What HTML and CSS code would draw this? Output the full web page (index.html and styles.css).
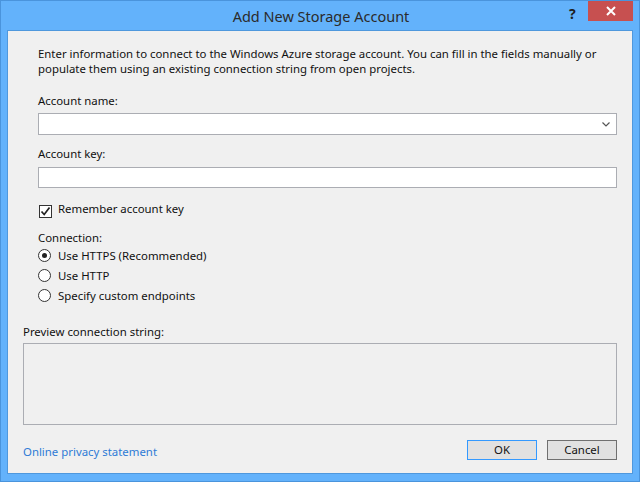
FILE: index.html
```html
<!DOCTYPE html>
<html>
<head>
<meta charset="utf-8">
<link rel="stylesheet" href="styles.css">
</head>
<body>
<div class="window">
  <div class="titlebar">
    <div class="title">Add New Storage Account</div>
    <div class="help">?</div>
    <div class="close">
      <svg width="12" height="12" viewBox="0 0 12 12"><path d="M2 2 L10 10 M10 2 L2 10" stroke="#fff" stroke-width="2"/></svg>
    </div>
  </div>
  <div class="client">
    <div class="form">
      <p class="intro">Enter information to connect to the Windows Azure storage account. You can fill in the fields manually or populate them using an existing connection string from open projects.</p>
      <div class="label l-name">Account name:</div>
      <div class="combo">
        <svg class="arrow" width="8" height="5" viewBox="0 0 8 5"><path d="M0.5 0.5 L4 4 L7.5 0.5" fill="none" stroke="#555" stroke-width="1.2"/></svg>
      </div>
      <div class="label l-key">Account key:</div>
      <div class="textbox"></div>
      <div class="check-row">
        <span class="checkbox">
          <svg width="11" height="11" viewBox="0 0 11 11"><path d="M1.5 5.5 L4.2 8.5 L9.5 1.5" fill="none" stroke="#222" stroke-width="1.7"/></svg>
        </span>
        <span>Remember account key</span>
      </div>
      <div class="label l-conn">Connection:</div>
      <div class="radios">
        <div class="radio-row"><span class="radio checked"></span><span>Use HTTPS (Recommended)</span></div>
        <div class="radio-row"><span class="radio"></span><span>Use HTTP</span></div>
        <div class="radio-row"><span class="radio"></span><span>Specify custom endpoints</span></div>
      </div>
    </div>
    <div class="preview-section">
      <div class="label">Preview connection string:</div>
      <div class="preview"></div>
    </div>
    <div class="footer">
      <a class="link">Online privacy statement</a>
      <div class="buttons">
        <button class="btn ok">OK</button>
        <button class="btn">Cancel</button>
      </div>
    </div>
  </div>
</div>
</body>
</html>
```

FILE: styles.css
```css
html, body {
  margin: 0;
  padding: 0;
}
body {
  width: 640px;
  height: 482px;
  overflow: hidden;
  font-family: "Noto Sans", "Open Sans", sans-serif;
  font-size: 11.4px;
  color: #111;
}
.window {
  width: 640px;
  height: 482px;
  box-sizing: border-box;
  background: #63b2fb;
  border: 1px solid #4a94dc;
  display: flex;
  flex-direction: column;
}
.titlebar {
  height: 29px;
  position: relative;
  flex: none;
}
.title {
  text-align: center;
  font-size: 14.5px;
  line-height: 30px;
  color: #2b2b2b;
  padding-left: 2px;
}
.help {
  position: absolute;
  left: 568px;
  top: 3px;
  font-weight: bold;
  font-size: 14px;
  color: #1e1e1e;
}
.close {
  position: absolute;
  left: 587px;
  top: 0;
  width: 45px;
  height: 20px;
  background: #c75050;
  display: flex;
  align-items: center;
  justify-content: center;
}
.client {
  margin: 0 6px 0 6px;
  height: 444px;
  box-sizing: border-box;
  background: #f0f0f0;
  border: 1px solid #4f98dd;
  display: flex;
  flex-direction: column;
}
.form {
  padding: 15px 15px 0 30px;
  display: flex;
  flex-direction: column;
  line-height: 15px;
}
.intro {
  margin: 0;
  line-height: 15px;
}
.label {
  line-height: 15px;
}
.l-name { margin-top: 17px; }
.l-key { margin-top: 11px; }
.l-conn { margin-top: 14px; }
.combo {
  margin-top: 5px;
  height: 22px;
  box-sizing: border-box;
  background: #fff;
  border: 1px solid #abadb3;
  display: flex;
  align-items: center;
  justify-content: flex-end;
  padding-right: 6px;
}
.textbox {
  margin-top: 6px;
  height: 21px;
  box-sizing: border-box;
  background: #fff;
  border: 1px solid #abadb3;
}
.check-row {
  margin-top: 13px;
  height: 15px;
  display: flex;
  align-items: center;
  gap: 6px;
  padding-left: 1px;
}
.checkbox {
  width: 13px;
  height: 13px;
  box-sizing: border-box;
  border: 1px solid #333;
  background: #fff;
  display: flex;
  align-items: center;
  justify-content: center;
  margin-top: 5px;
}
.radios {
  margin-top: 0;
  display: flex;
  flex-direction: column;
}
.radio-row {
  height: 20px;
  display: flex;
  align-items: center;
  gap: 7px;
}
.radio {
  width: 13px;
  height: 13px;
  box-sizing: border-box;
  border: 1px solid #333;
  border-radius: 50%;
  background: #fff;
  display: flex;
  align-items: center;
  justify-content: center;
}
.radio.checked::after {
  content: "";
  width: 5px;
  height: 5px;
  border-radius: 50%;
  background: #222;
}
.preview-section {
  margin-top: 19px;
  padding: 0 15px 0 15px;
  display: flex;
  flex-direction: column;
}
.preview {
  margin-top: 4px;
  height: 82px;
  box-sizing: border-box;
  border: 1px solid #abadb3;
}
.footer {
  margin-top: 15px;
  padding: 0 15px 0 15px;
  display: flex;
  justify-content: space-between;
  align-items: center;
}
.link {
  color: #2e7bd6;
  line-height: 15px;
  margin-top: 2px;
}
.buttons {
  display: flex;
  gap: 10px;
}
.btn {
  width: 70px;
  height: 20px;
  box-sizing: border-box;
  background: #e1e1e1;
  border: 1px solid #707070;
  font-family: "Noto Sans", "Open Sans", sans-serif;
  font-size: 11.4px;
  color: #111;
  padding: 0;
  line-height: 16px;
}
.btn.ok {
  border-color: #3399ff;
}
```
